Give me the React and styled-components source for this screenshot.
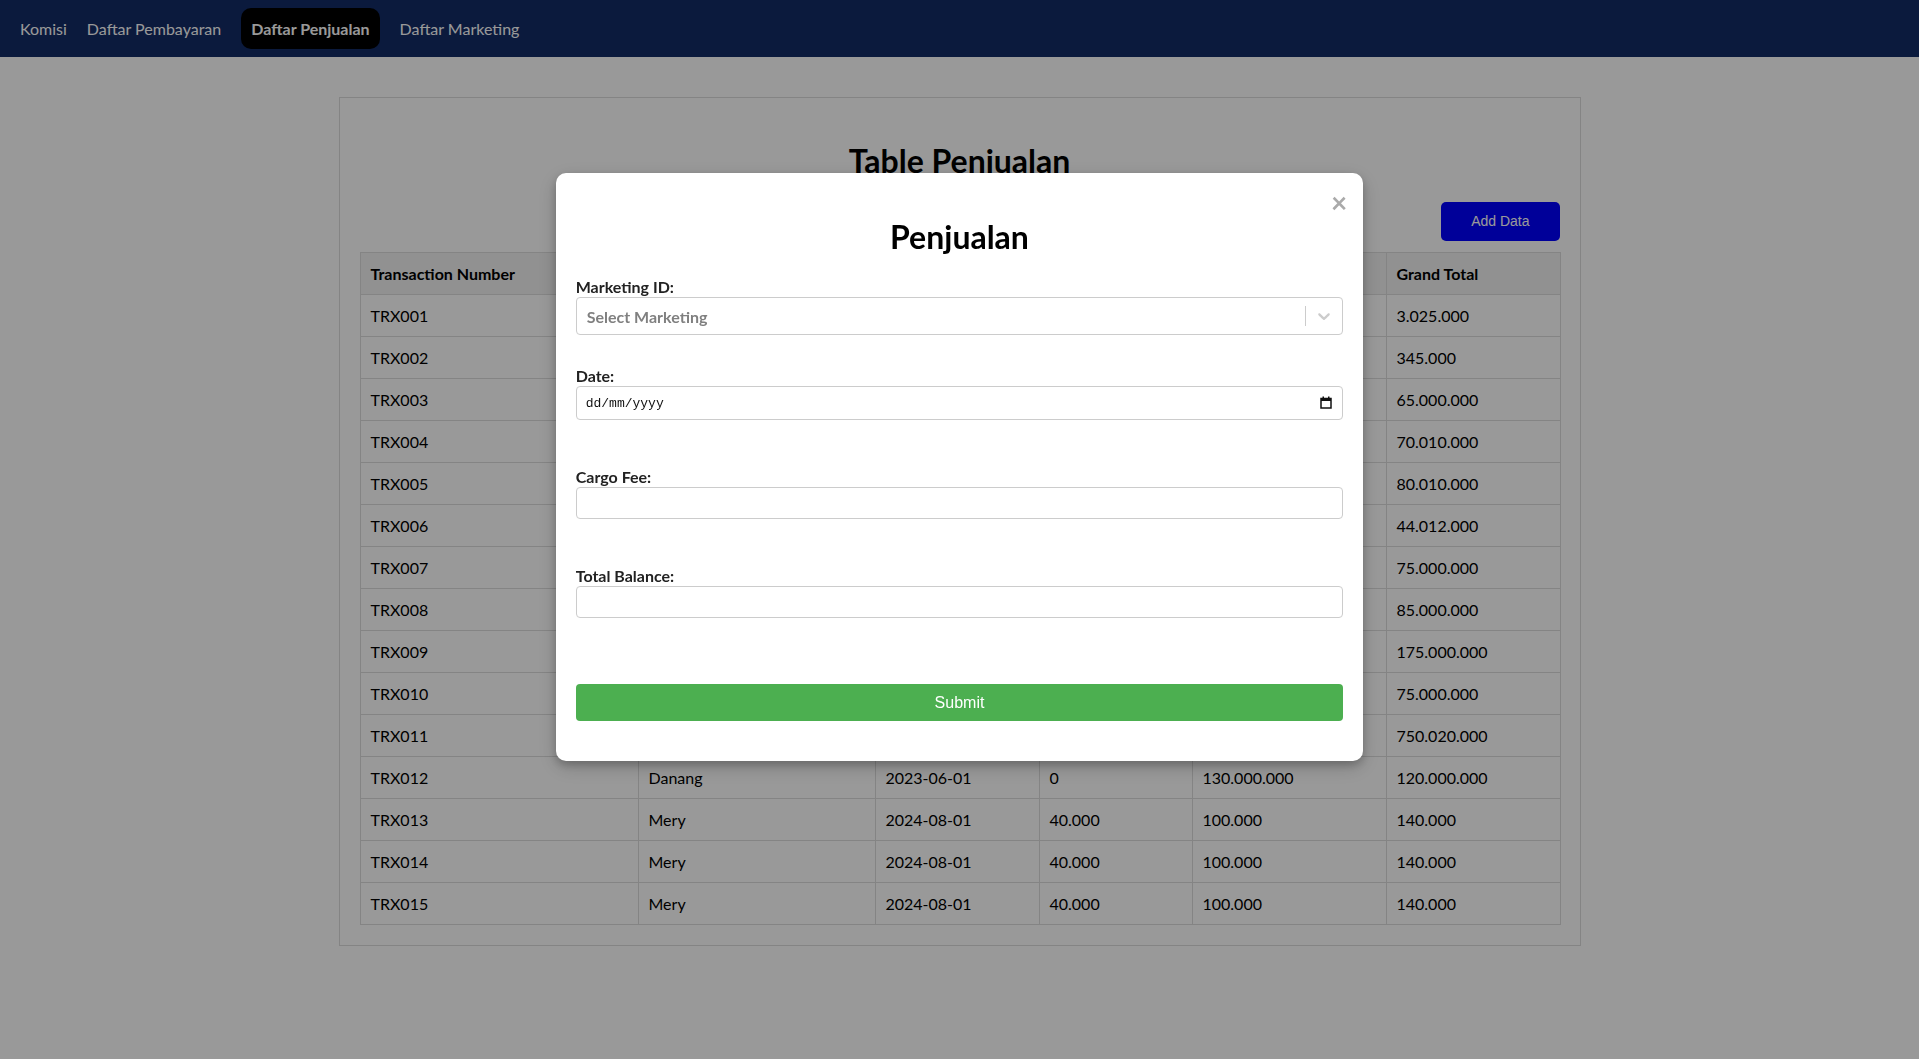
import React from 'react'
import styled, { createGlobalStyle } from 'styled-components'

const GlobalStyle = createGlobalStyle`
  body {
    margin: 0;
    background: #fff;
    font-family: Lato, "Open Sans", sans-serif;
    color: #000;
  }
`

const Nav = styled.nav`
  display: flex;
  align-items: center;
  padding: 8px 10px;
  background: #132c67;
`
const NavLink = styled.a`
  margin: 0 10px;
  padding: ${(p) => (p.$active ? '10px' : '10px 0')};
  border-radius: 10px;
  font-size: 16px;
  line-height: 21px;
  color: #fff;
  text-decoration: none;
  font-weight: ${(p) => (p.$active ? 700 : 400)};
  background: ${(p) => (p.$active ? '#000' : 'transparent')};
`

const Page = styled.main`
  padding: 40px 0 60px;
`
const Card = styled.section`
  width: 1200px;
  margin: 0 auto;
  padding: 20px;
  background: #fff;
  border: 1px solid #dcdcdc;
`
const Title = styled.h1`
  margin: 21px 0 20px;
  font-size: 32px;
  line-height: 43px;
  text-align: center;
`
const Toolbar = styled.div`
  display: flex;
  justify-content: flex-end;
  margin-bottom: 11px;
`
const AddButton = styled.button`
  padding: 11px 30px;
  border: none;
  border-radius: 5px;
  background: #0000ff;
  color: #fff;
  font: 14px/17px "Liberation Sans", Arial, sans-serif;
`
const Table = styled.table`
  width: 1200px;
  table-layout: fixed;
  border-collapse: collapse;
  font-size: 16px;
`
const Col = styled.col`
  width: ${(p) => p.$w}px;
`
const Th = styled.th`
  padding: 10px;
  line-height: 21px;
  border: 1px solid #ddd;
  background: #f2f2f2;
  text-align: left;
  font-weight: 700;
`
const Td = styled.td`
  padding: 10px;
  line-height: 21px;
  border: 1px solid #ddd;
  text-align: left;
`

const Overlay = styled.div`
  position: fixed;
  inset: 0;
  display: flex;
  justify-content: center;
  align-items: flex-start;
  padding-top: 173px;
  background: rgba(0, 0, 0, 0.4);
`
const Modal = styled.div`
  position: relative;
  width: 40%;
  padding: 20px 20px 40px;
  background: #fff;
  border-radius: 10px;
  box-shadow: 0 4px 8px rgba(0, 0, 0, 0.2), 0 6px 20px rgba(0, 0, 0, 0.19);
`
const Close = styled.span`
  position: absolute;
  top: 12px;
  right: 16px;
  color: #aaa;
  font-size: 28px;
  line-height: 34px;
  font-weight: 700;
  cursor: pointer;
`
const ModalTitle = styled.h2`
  margin: 22px 0 18px;
  font-size: 32px;
  line-height: 43px;
  text-align: center;
`
const Field = styled.label`
  display: block;
  margin-bottom: ${(p) => p.$after}px;
  font-size: 16px;
  font-weight: 700;
  line-height: 21px;
  color: #222;
`
const SelectBox = styled.div`
  display: flex;
  align-items: center;
  height: 38px;
  box-sizing: border-box;
  border: 1px solid #ccc;
  border-radius: 4px;
  background: #fff;
`
const Placeholder = styled.div`
  flex: 1;
  padding: 2px 10px;
  color: #808080;
  font-weight: 700;
`
const Separator = styled.span`
  align-self: stretch;
  width: 1px;
  margin: 8px 0;
  background: #ccc;
`
const Indicator = styled.span`
  display: flex;
  padding: 8px;
  color: #ccc;
`
const InputWrap = styled.div`
  position: relative;
`
const Input = styled.input`
  display: block;
  width: 100%;
  height: ${(p) => p.$h || 32}px;
  box-sizing: border-box;
  padding: 0 9px;
  border: 1px solid #ccc;
  border-radius: 4px;
  font: 13px "Liberation Mono", monospace;
  &::placeholder {
    color: #111;
  }
`
const CalendarIcon = styled.svg`
  position: absolute;
  right: 11px;
  top: 10px;
`
const Submit = styled.button`
  display: block;
  width: 100%;
  height: 37px;
  margin-top: 66px;
  border: none;
  border-radius: 4px;
  background: #4caf50;
  color: #fff;
  font: 16px "Liberation Sans", Arial, sans-serif;
`

const rows = [
  ['TRX001', 'Alfandy', '2023-05-22', '25.000', '3.000.000', '3.025.000'],
  ['TRX002', 'Mery', '2023-05-22', '45.000', '300.000', '345.000'],
  ['TRX003', 'Danang', '2023-05-22', '0', '65.000.000', '65.000.000'],
  ['TRX004', 'Alfandy', '2023-05-23', '10.000', '70.000.000', '70.010.000'],
  ['TRX005', 'Mery', '2023-05-23', '10.000', '80.000.000', '80.010.000'],
  ['TRX006', 'Danang', '2023-05-23', '12.000', '44.000.000', '44.012.000'],
  ['TRX007', 'Alfandy', '2023-05-24', '0', '75.000.000', '75.000.000'],
  ['TRX008', 'Mery', '2023-05-24', '0', '85.000.000', '85.000.000'],
  ['TRX009', 'Danang', '2023-05-25', '0', '175.000.000', '175.000.000'],
  ['TRX010', 'Alfandy', '2023-05-26', '0', '75.000.000', '75.000.000'],
  ['TRX011', 'Mery', '2023-05-27', '20.000', '750.000.000', '750.020.000'],
  ['TRX012', 'Danang', '2023-06-01', '0', '130.000.000', '120.000.000'],
  ['TRX013', 'Mery', '2024-08-01', '40.000', '100.000', '140.000'],
  ['TRX014', 'Mery', '2024-08-01', '40.000', '100.000', '140.000'],
  ['TRX015', 'Mery', '2024-08-01', '40.000', '100.000', '140.000'],
]

const headers = ['Transaction Number', 'Marketing Name', 'Date', 'Cargo Fee', 'Total Balance', 'Grand Total']
const widths = [278, 237, 164, 153, 194, 174]

const App = () => (
  <>
    <GlobalStyle />
    <Nav>
      <NavLink href="#">Komisi</NavLink>
      <NavLink href="#">Daftar Pembayaran</NavLink>
      <NavLink href="#" $active>Daftar Penjualan</NavLink>
      <NavLink href="#">Daftar Marketing</NavLink>
    </Nav>

    <Page>
      <Card>
        <Title>Table Penjualan</Title>
        <Toolbar>
          <AddButton>Add Data</AddButton>
        </Toolbar>
        <Table>
          <colgroup>
            {widths.map((w, i) => (
              <Col key={i} $w={w} />
            ))}
          </colgroup>
          <thead>
            <tr>
              {headers.map((h) => (
                <Th key={h}>{h}</Th>
              ))}
            </tr>
          </thead>
          <tbody>
            {rows.map((r) => (
              <tr key={r[0]}>
                {r.map((c, i) => (
                  <Td key={i}>{c}</Td>
                ))}
              </tr>
            ))}
          </tbody>
        </Table>
      </Card>
    </Page>

    <Overlay>
      <Modal>
        <Close>×</Close>
        <ModalTitle>Penjualan</ModalTitle>

        <Field $after={30}>
          Marketing ID:
          <SelectBox>
            <Placeholder>Select Marketing</Placeholder>
            <Separator />
            <Indicator>
              <svg width="20" height="20" viewBox="0 0 20 20" fill="currentColor">
                <path d="M4.516 7.548c0.436-0.446 1.043-0.481 1.576 0l3.908 3.747 3.908-3.747c0.533-0.481 1.141-0.446 1.574 0 0.436 0.445 0.408 1.197 0 1.615-0.406 0.418-4.695 4.502-4.695 4.502-0.217 0.223-0.502 0.335-0.787 0.335s-0.57-0.112-0.789-0.335c0 0-4.287-4.084-4.695-4.502s-0.436-1.17 0-1.615z" />
              </svg>
            </Indicator>
          </SelectBox>
        </Field>

        <Field $after={46}>
          Date:
          <InputWrap>
            <Input $h={34} placeholder="dd/mm/yyyy" />
            <CalendarIcon width="12" height="13" viewBox="0 0 12 13">
              <rect x="1" y="2.5" width="10" height="9.5" fill="none" stroke="#111" strokeWidth="1.5" />
              <rect x="1" y="2" width="10" height="3" fill="#111" />
              <rect x="2.5" y="0.5" width="1.5" height="2" fill="#111" />
              <rect x="8" y="0.5" width="1.5" height="2" fill="#111" />
            </CalendarIcon>
          </InputWrap>
        </Field>

        <Field $after={46}>
          Cargo Fee:
          <Input />
        </Field>

        <Field $after={46}>
          Total Balance:
          <Input />
        </Field>

        <Submit>Submit</Submit>
      </Modal>
    </Overlay>
  </>
)

export default App
